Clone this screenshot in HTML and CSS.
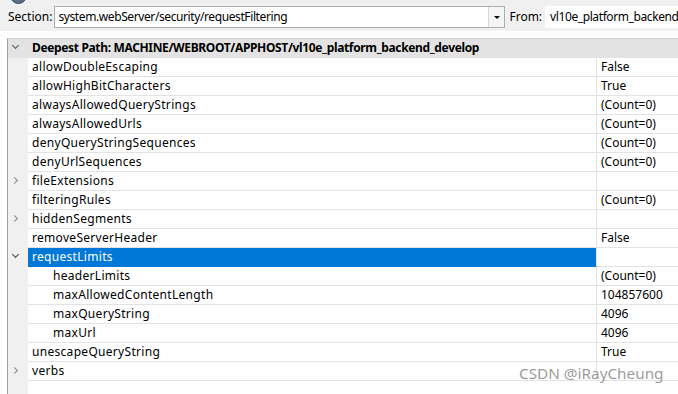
FILE: index.html
```html
<!doctype html>
<html lang="en">
    <head>
        <meta charset="UTF-8" />
        <title>Configuration Editor</title>
        <link rel="stylesheet" href="styles.css">
    </head>
    <body>
        <div class="logo"></div>
        <div class="toolbar">
            <span class="label">Section:</span>
            <div class="combo">
                <span class="combo-text">system.webServer/security/requestFiltering</span>
                <span class="combo-btn"></span>
            </div>
            <span class="label from-label">From:</span>
            <div class="from-field">vl10e_platform_backend_develop</div>
        </div>

        <div class="grid">
            <div class="row header">
                <div class="gutter"><span class="chev down"></span></div>
                <div class="name">Deepest Path: MACHINE/WEBROOT/APPHOST/vl10e_platform_backend_develop</div>
            </div>
            <div class="row">
                <div class="gutter"></div>
                <div class="name">allowDoubleEscaping</div>
                <div class="value">False</div>
            </div>
            <div class="row">
                <div class="gutter"></div>
                <div class="name">allowHighBitCharacters</div>
                <div class="value">True</div>
            </div>
            <div class="row">
                <div class="gutter"></div>
                <div class="name">alwaysAllowedQueryStrings</div>
                <div class="value">(Count=0)</div>
            </div>
            <div class="row">
                <div class="gutter"></div>
                <div class="name">alwaysAllowedUrls</div>
                <div class="value">(Count=0)</div>
            </div>
            <div class="row">
                <div class="gutter"></div>
                <div class="name">denyQueryStringSequences</div>
                <div class="value">(Count=0)</div>
            </div>
            <div class="row">
                <div class="gutter"></div>
                <div class="name">denyUrlSequences</div>
                <div class="value">(Count=0)</div>
            </div>
            <div class="row">
                <div class="gutter"><span class="chev right"></span></div>
                <div class="name">fileExtensions</div>
                <div class="value"></div>
            </div>
            <div class="row">
                <div class="gutter"></div>
                <div class="name">filteringRules</div>
                <div class="value">(Count=0)</div>
            </div>
            <div class="row">
                <div class="gutter"><span class="chev right"></span></div>
                <div class="name">hiddenSegments</div>
                <div class="value"></div>
            </div>
            <div class="row">
                <div class="gutter"></div>
                <div class="name">removeServerHeader</div>
                <div class="value">False</div>
            </div>
            <div class="row selected">
                <div class="gutter"><span class="chev down"></span></div>
                <div class="name">requestLimits</div>
                <div class="value"></div>
            </div>
            <div class="row">
                <div class="gutter"></div>
                <div class="name child">headerLimits</div>
                <div class="value">(Count=0)</div>
            </div>
            <div class="row">
                <div class="gutter"></div>
                <div class="name child">maxAllowedContentLength</div>
                <div class="value">104857600</div>
            </div>
            <div class="row">
                <div class="gutter"></div>
                <div class="name child">maxQueryString</div>
                <div class="value">4096</div>
            </div>
            <div class="row">
                <div class="gutter"></div>
                <div class="name child">maxUrl</div>
                <div class="value">4096</div>
            </div>
            <div class="row">
                <div class="gutter"></div>
                <div class="name">unescapeQueryString</div>
                <div class="value">True</div>
            </div>
            <div class="row">
                <div class="gutter"><span class="chev right"></span></div>
                <div class="name">verbs</div>
                <div class="value"></div>
            </div>
            <div class="filler">
                <div class="gutter"></div>
            </div>
        </div>

        <div class="watermark">CSDN @iRayCheung</div>
    </body>
</html>
```

FILE: styles.css
```css
:root {
    --bar-bg: #f0f0f0;
    --text-color: #000000;
    --gutter-bg: #f0f0f0;
    --header-bg: #e3e3e3;
    --line-color: #e3e3e3;
    --border-color: #a0a0a0;
    --selected-bg: #0078d7;
    --chev-color: #8a8a8a;
}

* {
    box-sizing: border-box;
}

html,
body {
    margin: 0;
    padding: 0;
}

body {
    width: 678px;
    height: 394px;
    overflow: hidden;
    background: #ffffff;
    color: var(--text-color);
    font-family: "Noto Sans", "Open Sans", sans-serif;
    font-size: 12px;
    position: relative;
}

/* Partially visible app icon at the very top */
.logo {
    position: absolute;
    left: 10px;
    top: -13px;
    width: 17px;
    height: 17px;
    border-radius: 50%;
    background: #5a6f86;
    border: 1px solid #3b4a5c;
}

.toolbar {
    height: 31px;
    background: var(--bar-bg);
    display: flex;
    align-items: center;
    padding-left: 8px;
    padding-top: 2px;
}

.label {
    white-space: nowrap;
}

.combo {
    margin-left: 2px;
    width: 451px;
    height: 22px;
    border: 1px solid #abadb3;
    background: #ffffff;
    display: flex;
    align-items: stretch;
}

.combo-text {
    flex: 1;
    padding-left: 3px;
    line-height: 20px;
    white-space: nowrap;
    overflow: hidden;
    letter-spacing: -0.4px;
}

.combo-btn {
    width: 16px;
    border-left: 1px solid #d9d9d9;
    background: #f5f5f5;
    position: relative;
}

.combo-btn::after {
    content: "";
    position: absolute;
    left: 5px;
    top: 9px;
    border-left: 3px solid transparent;
    border-right: 3px solid transparent;
    border-top: 3px solid #000000;
}

.from-label {
    margin-left: 4px;
}

.from-field {
    margin-left: 3px;
    flex: 1;
    height: 22px;
    background: #ffffff;
    padding-left: 5px;
    line-height: 22px;
    white-space: nowrap;
    overflow: hidden;
    letter-spacing: -0.4px;
}

.grid {
    margin-top: 7px;
    margin-left: 7px;
    border-left: 1px solid var(--border-color);
    border-top: 1px solid #d0d0d0;
    height: 356px;
    display: flex;
    flex-direction: column;
}

.row {
    display: flex;
    height: 19px;
    line-height: 18px;
    white-space: nowrap;
}

.gutter {
    width: 20px;
    flex: none;
    background: var(--gutter-bg);
    position: relative;
}

.name {
    width: 569px;
    flex: none;
    padding-left: 4px;
    border-bottom: 1px solid var(--line-color);
    border-right: 1px solid var(--line-color);
    overflow: hidden;
    letter-spacing: 0.3px;
}

.name.child {
    padding-left: 25px;
}

.value {
    flex: 1;
    padding-left: 4px;
    border-bottom: 1px solid var(--line-color);
    overflow: hidden;
}

.header {
    background: var(--header-bg);
}

.header .gutter {
    background: var(--header-bg);
}

.header .name {
    width: auto;
    flex: 1;
    font-weight: bold;
    border: none;
    letter-spacing: -0.35px;
}

.selected .name {
    background: var(--selected-bg);
    color: #ffffff;
    border-bottom-color: var(--selected-bg);
}

.filler {
    flex: 1;
    display: flex;
}

/* Expand / collapse chevrons */
.chev {
    position: absolute;
    width: 5px;
    height: 5px;
    border-right: 1.3px solid var(--chev-color);
    border-bottom: 1.3px solid var(--chev-color);
}

.chev.right {
    left: 4px;
    top: 6px;
    transform: rotate(-45deg);
}

.chev.down {
    left: 5px;
    top: 4px;
    transform: rotate(45deg);
    border-color: #444444;
}

.header .chev.down {
    border-color: #555555;
}

.watermark {
    position: absolute;
    left: 519px;
    top: 363px;
    font-family: "Noto Sans", sans-serif;
    font-size: 15.3px;
    color: rgba(120, 120, 120, 0.75);
    white-space: nowrap;
}
```
